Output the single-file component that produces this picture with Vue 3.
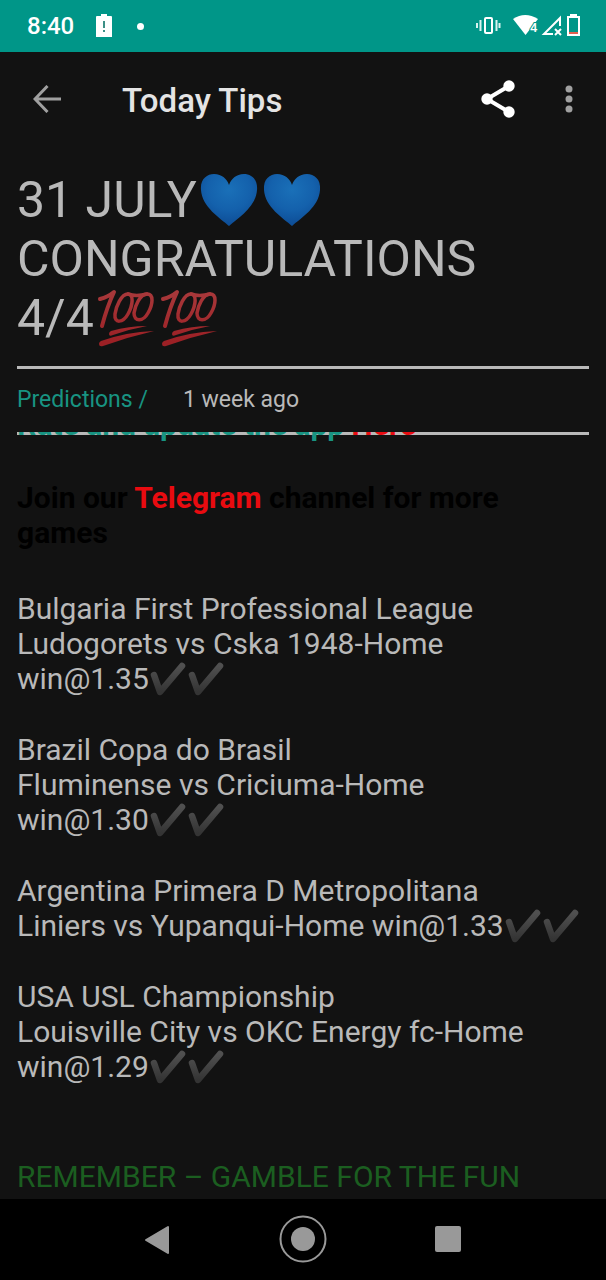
<script setup>
const tips = [
  { league: 'Bulgaria First Professional League', game: 'Ludogorets vs Cska 1948-Home', odds: 'win@1.35' },
  { league: 'Brazil Copa do Brasil', game: 'Fluminense vs Criciuma-Home', odds: 'win@1.30' },
  { league: 'Argentina Primera D Metropolitana', game: 'Liniers vs Yupanqui-Home', odds: 'win@1.33' },
  { league: 'USA USL Championship', game: 'Louisville City vs OKC Energy fc-Home', odds: 'win@1.29' }
]
</script>

<template>
  <div class="screen">
    <svg class="defs" width="0" height="0" aria-hidden="true">
      <defs>
        <radialGradient id="heartFill" cx="50%" cy="30%" r="65%">
          <stop offset="0" stop-color="#1a70b8" />
          <stop offset="0.6" stop-color="#1461ac" />
          <stop offset="1" stop-color="#0e4f98" />
        </radialGradient>
        <linearGradient id="tickFill" x1="0" y1="0" x2="0" y2="1">
          <stop offset="0" stop-color="#505050" />
          <stop offset="1" stop-color="#343434" />
        </linearGradient>
        <linearGradient id="hundredFill" x1="0" y1="0" x2="0" y2="54" gradientUnits="userSpaceOnUse">
          <stop offset="0" stop-color="#a93a3c" />
          <stop offset="1" stop-color="#9c2025" />
        </linearGradient>
      </defs>
    </svg>

    <header class="status">
      <div class="group left">
        <time>8:40</time>
        <svg width="16" height="24" viewBox="0 0 16 24" aria-hidden="true">
          <path d="M5 0h6v2h4q1 0 1 1v20H0V3q0-1 1-1h4z" fill="#fff" />
          <path d="M7 7h2v7H7zM7 16h2v2H7z" fill="#3c8f86" />
        </svg>
        <span class="dot"></span>
      </div>
      <svg class="icons" width="106" height="24" viewBox="0 0 106 24" aria-hidden="true">
        <rect x="11" y="4" width="7" height="15" rx="1" fill="none" stroke="#fff" stroke-width="2" />
        <path d="M3 9v5M6.500 6v11M22.500 6v11M25.500 9v5" stroke="#d8f3ef" stroke-width="2" fill="none" />
        <path d="M39 5Q51-3 64 5L51.500 21z" fill="#fff" />
        <text x="56" y="18" class="wifi">4</text>
        <path d="M86 12V4L70 20h9" fill="none" stroke="#fff" stroke-width="2" />
        <path d="M81 15l6 6M87 15l-6 6" stroke="#fff" stroke-width="2" />
        <rect x="94" y="3" width="11" height="18" fill="none" stroke="#fff" stroke-width="2" />
        <path d="M96 0h7v3h-7z" fill="#fff" />
        <path d="M95 18h9v2h-9z" fill="#e0604f" />
      </svg>
    </header>

    <nav class="toolbar" aria-label="App bar">
      <button aria-label="Back">
        <svg width="28" height="28" viewBox="0 0 28 28"><path d="M14.500 1L2 14l12.500 13M2 14h26" fill="none" stroke="#a0a0a0" stroke-width="3" /></svg>
      </button>
      <h1>Today Tips</h1>
      <button aria-label="Share">
        <svg width="34" height="38" viewBox="0 0 34 38">
          <path d="M28 6L6 19l22 13" fill="none" stroke="#fff" stroke-width="4" />
          <circle cx="28" cy="6" r="5.700" fill="#fff" /><circle cx="6" cy="19" r="5.700" fill="#fff" /><circle cx="28" cy="32" r="5.700" fill="#fff" />
        </svg>
      </button>
      <button aria-label="More options">
        <svg width="8" height="28" viewBox="0 0 8 28" fill="#a0a0a0"><circle cx="4" cy="4" r="3.500" /><circle cx="4" cy="14" r="3.500" /><circle cx="4" cy="24" r="3.500" /></svg>
      </button>
    </nav>

    <main>
      <h2>
        31 JULY<svg v-for="n in 2" :key="n" class="emoji" viewBox="0 0 63 60" role="img" aria-label="blue heart"><path d="M32 56C23 48 5 37 4 20C3 9 10 4 17 4C25 4 30 9 32 15C34 9 39 4 47 4C54 4 61 9 60 20C59 37 41 48 32 56z" fill="url(#heartFill)" /></svg><br>
        CONGRATULATIONS<br>
        4/4<svg v-for="n in 2" :key="n" class="emoji" viewBox="0 0 63 60" role="img" aria-label="hundred points">
          <g fill="none" stroke="url(#hundredFill)" stroke-width="3.500" stroke-linecap="round" stroke-linejoin="round">
            <path d="M6 11Q14 9 20 4Q13 19 8 38" stroke-width="4" />
            <path d="M34 6C27 6 22 19 21 26C20 36 29 35 34 26C39 17 40 6 34 6z" />
            <path d="M53 6C46 6 41 18 40 25C40 34 49 34 54 25C59 16 60 6 53 6z" />
            <path d="M34 6Q42 9 53 6" />
          </g>
          <path d="M17 43Q35 38 53 38Q36 41 19 47Q15 49 15 46Q15 44 17 43zM7 53Q32 44 60 43Q34 49 9 58Q5 59 5 56Q5 54 7 53z" fill="url(#hundredFill)" />
        </svg>
      </h2>
      <div class="meta"><a href="#predictions">Predictions /</a><span>1 week ago</span></div>
      <div class="viewport">
        <article>
          <p class="notice rate">Rate and update the app <a href="#app">Here</a></p>
          <p class="notice join">Join our <a href="#telegram">Telegram</a> channel for more games</p>
          <p v-for="tip in tips" :key="tip.league">
            {{ tip.league }}<br>
            {{ tip.game }} <span class="odds">{{ tip.odds }}<svg v-for="n in 2" :key="n" class="tick" viewBox="0 0 38 36" role="img" aria-label="won"><path d="M5 14L11 31L33 5" fill="none" stroke="url(#tickFill)" stroke-width="6.500" stroke-linecap="round" stroke-linejoin="round" /></svg></span>
          </p>
          <p class="remember">REMEMBER – GAMBLE FOR THE FUN</p>
        </article>
      </div>
    </main>

    <nav class="system" aria-label="System navigation">
      <button aria-label="Back"><svg width="48" height="48" viewBox="0 0 48 48"><path d="M34 12v26L12 25z" fill="#999" stroke="#999" stroke-width="2" stroke-linejoin="round" /></svg></button>
      <button aria-label="Home"><svg width="48" height="48" viewBox="0 0 48 48"><circle cx="24" cy="24" r="22.500" fill="none" stroke="#999" stroke-width="2" /><circle cx="24" cy="24" r="12" fill="#999" /></svg></button>
      <button aria-label="Recent apps"><svg width="48" height="48" viewBox="0 0 48 48"><rect x="11" y="11" width="26" height="26" rx="2" fill="#999" /></svg></button>
    </nav>
  </div>
</template>

<style>
body { margin: 0; background: #121212; }
</style>

<style scoped>
.screen { display: flex; flex-direction: column; height: 100vh; overflow: hidden; background: #121212; color: #b9b9b9; font-family: Roboto, "Liberation Sans", sans-serif; }
.defs { position: absolute; }
button { display: flex; align-items: center; justify-content: center; padding: 0; border: 0; background: none; cursor: pointer; }
a { text-decoration: none; }
.status { display: flex; flex: none; align-items: center; justify-content: space-between; height: 52px; padding: 0 26px 0 27px; box-sizing: border-box; background: #009688; color: #fff; }
.group { display: flex; align-items: center; gap: 22px; }
.group time { font-size: 24px; font-weight: 500; line-height: 28px; }
.dot { width: 7px; height: 7px; margin-left: 3px; border-radius: 50%; background: #fff; }
.wifi { font-size: 13px; font-weight: 500; fill: #fff; stroke: #009688; stroke-width: 2px; paint-order: stroke; }
.toolbar { display: flex; flex: none; align-items: center; height: 94px; padding: 0 33px 0 33px; }
.toolbar h1 { flex: 1; margin: 0 0 0 61px; padding-top: 3px; color: #e4e4e4; font-size: 33px; font-weight: 500; line-height: 40px; }
.toolbar button + button { margin-left: 50px; }
main { display: flex; flex: 1; flex-direction: column; min-height: 0; padding: 25px 17px 0; }
h2 { flex: none; margin: 0; padding-bottom: 18px; font-size: 50px; font-weight: 400; line-height: 59px; }
.emoji { width: 63px; height: 60px; margin: -8px 0; vertical-align: -5px; }
.meta { display: flex; flex: none; gap: 35px; box-sizing: border-box; height: 66px; padding-top: 17px; border-top: 3px solid #b9b9b9; font-size: 23px; line-height: 28px; }
.meta a { color: #189482; }
.viewport { flex: 1; min-height: 0; overflow: hidden; background: linear-gradient(#b9b9b9, #b9b9b9) top / 100% 3px no-repeat; }
article { margin-top: -25px; font-size: 30px; line-height: 35px; }
p { margin: 0 0 36px; }
.notice { color: #000; font-weight: 700; }
.notice a { color: #e90b10; }
.rate { margin-bottom: 38px; color: #189482; }
.join { margin-bottom: 41px; }
.odds { white-space: nowrap; }
.tick { width: 38px; height: 36px; margin: -2px 0; vertical-align: -6px; }
.remember { margin-top: 75px; color: #1b5e20; }
.system { display: flex; flex: none; align-items: center; justify-content: center; gap: 97px; height: 81px; box-sizing: border-box; padding-bottom: 2px; background: #000; }
</style>
